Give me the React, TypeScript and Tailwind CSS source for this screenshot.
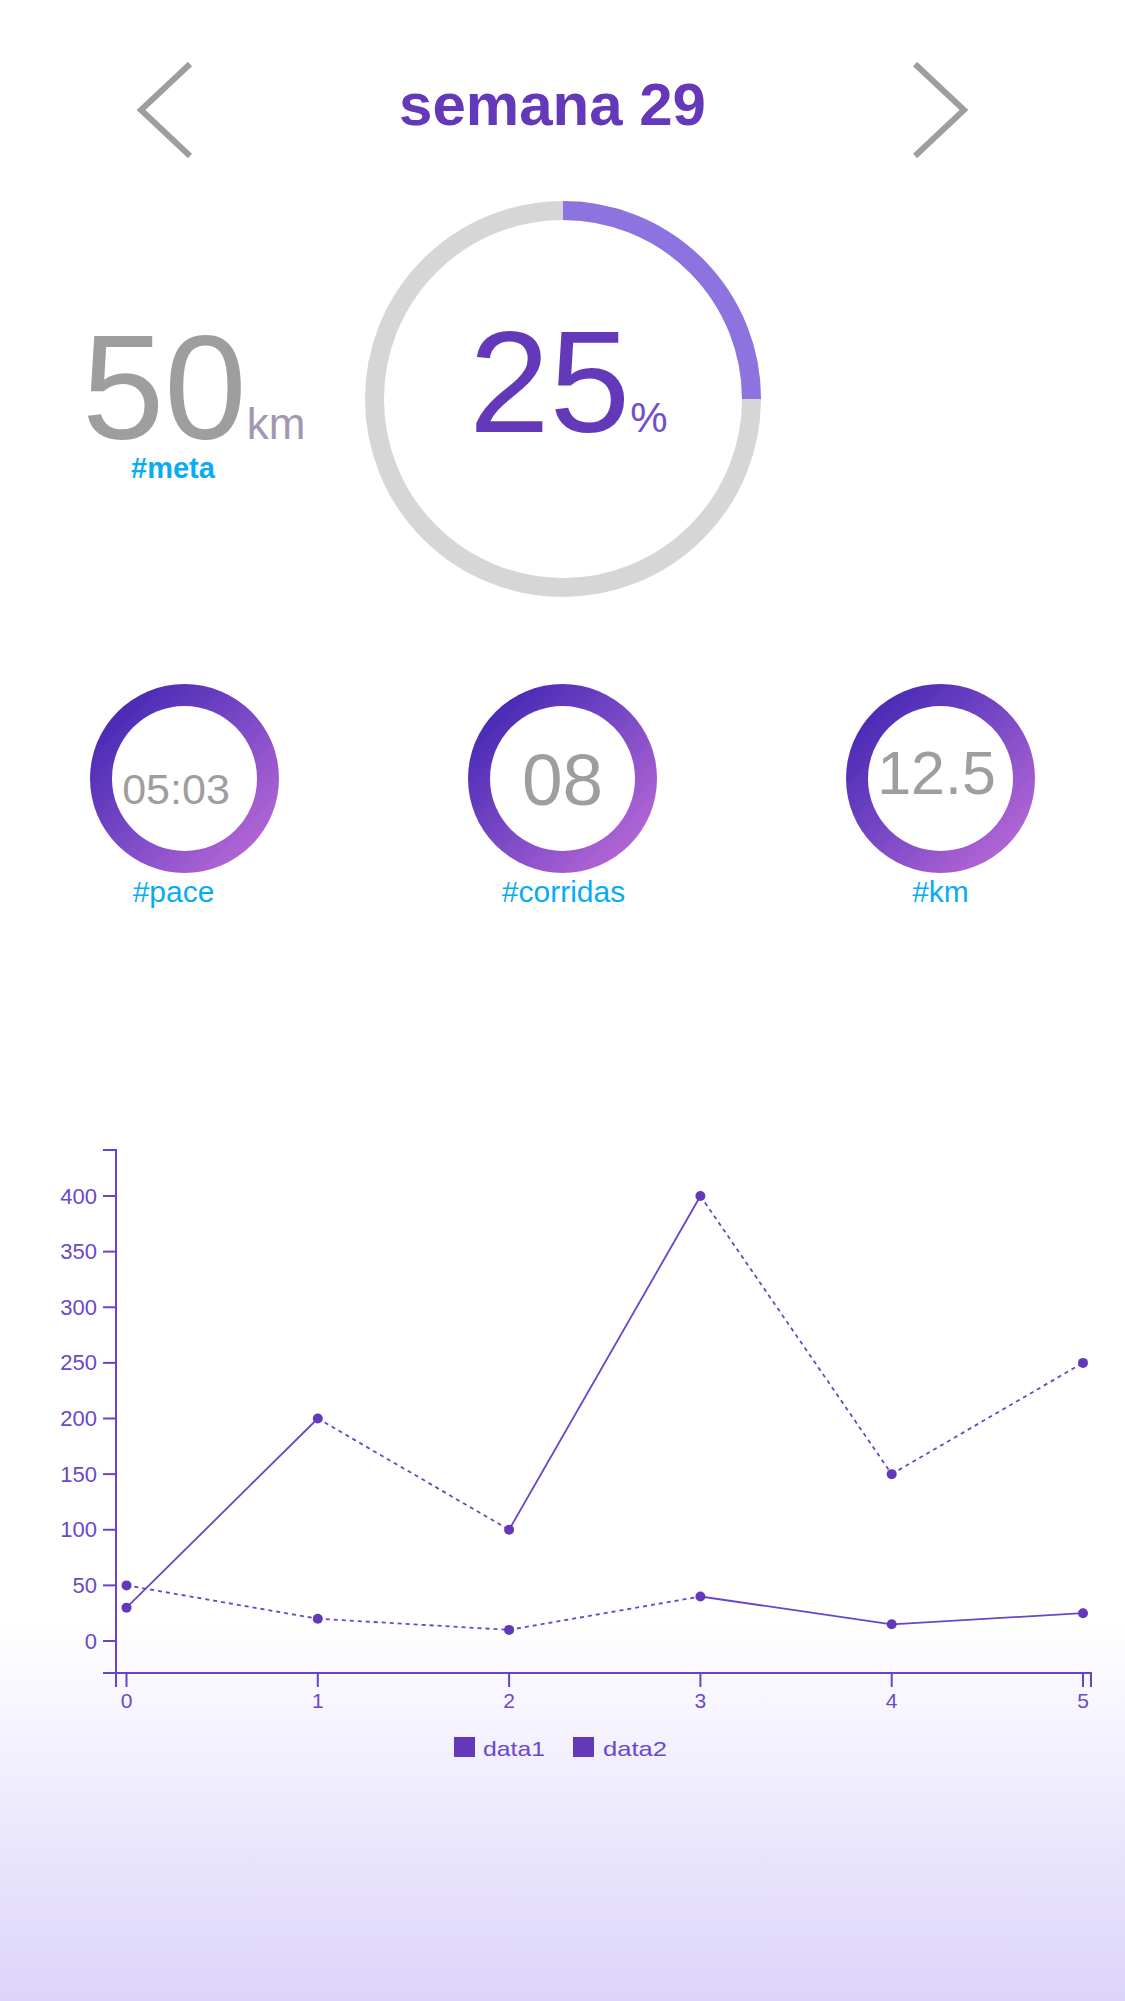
import React from "react";

const PURPLE = "#6439b9";
const AXIS = "#6a40cf";

function Chevron({ dir }: { dir: "left" | "right" }) {
  const pts = dir === "left" ? "57,2 8,48 57,94" : "3,2 52,48 3,94";
  return (
    <svg width="60" height="96" viewBox="0 0 60 96" className="shrink-0">
      <polyline points={pts} fill="none" stroke="#9e9e9e" strokeWidth="6" strokeLinejoin="miter" strokeLinecap="butt" />
    </svg>
  );
}

function Stat({
  value,
  label,
  textClass,
  labelClass,
}: {
  value: string;
  label: string;
  textClass: string;
  labelClass: string;
}) {
  return (
    <div className="flex w-[189px] flex-col items-center">
      <div className="relative h-[189px] w-[189px] rounded-full bg-[linear-gradient(135deg,#4427b3_10%,#7a49c6_50%,#b868d6_90%)] p-[22px]">
        <div className="h-full w-full rounded-full bg-white" />
        <div className={`absolute inset-0 flex justify-center ${textClass}`}>
          <span className="leading-none text-[#9e9e9e]">{value}</span>
        </div>
      </div>
      <span className={`mt-[4px] text-[30px] leading-none text-[#08acf3] ${labelClass}`}>{label}</span>
    </div>
  );
}

const X = (i: number) => 126.5 + i * 191.3;
const Y = (v: number) => 1641 - v * 1.1125;

const data1 = [30, 200, 100, 400, 150, 250];
const data2 = [50, 20, 10, 40, 15, 25];

function seg(d: number[], a: number, b: number) {
  return `M${X(a)},${Y(d[a])}L${X(b)},${Y(d[b])}`;
}

function Chart() {
  const yTicks = [0, 50, 100, 150, 200, 250, 300, 350, 400];
  const xTicks = [0, 1, 2, 3, 4, 5];
  const s1: [number, number, boolean][] = [
    [0, 1, false],
    [1, 2, true],
    [2, 3, false],
    [3, 4, true],
    [4, 5, true],
  ];
  const s2: [number, number, boolean][] = [
    [0, 1, true],
    [1, 2, true],
    [2, 3, true],
    [3, 4, false],
    [4, 5, false],
  ];
  return (
    <svg
      width="1125"
      height="660"
      viewBox="0 1130 1125 660"
      className="block"
      style={{ fontFamily: '"Liberation Sans", Arial, sans-serif' }}
    >
      <path d="M103,1150H116V1673H103" fill="none" stroke={AXIS} strokeWidth="2" />
      <path d="M116,1687V1673H1091V1687" fill="none" stroke={AXIS} strokeWidth="2" />
      {yTicks.map((v) => (
        <g key={v}>
          <line x1="103" x2="116" y1={Y(v)} y2={Y(v)} stroke={AXIS} strokeWidth="2" />
          <text x="97" y={Y(v) + 7.5} textAnchor="end" fontSize="22" fill="#6b48cb">
            {v}
          </text>
        </g>
      ))}
      {xTicks.map((i) => (
        <g key={i}>
          <line x1={X(i)} x2={X(i)} y1="1673" y2="1687" stroke={AXIS} strokeWidth="2" />
          <text x={X(i)} y="1708" textAnchor="middle" fontSize="21" fill="#6b48cb">
            {i}
          </text>
        </g>
      ))}
      {s1.map(([a, b, dashed], k) => (
        <path
          key={"a" + k}
          d={seg(data1, a, b)}
          fill="none"
          stroke="#6a45c8"
          strokeWidth="1.8"
          strokeDasharray={dashed ? "4 4" : undefined}
        />
      ))}
      {s2.map(([a, b, dashed], k) => (
        <path
          key={"b" + k}
          d={seg(data2, a, b)}
          fill="none"
          stroke="#6a45c8"
          strokeWidth="1.8"
          strokeDasharray={dashed ? "4 4" : undefined}
        />
      ))}
      {data1.map((v, i) => (
        <circle key={"p1" + i} cx={X(i)} cy={Y(v)} r="5" fill={PURPLE} />
      ))}
      {data2.map((v, i) => (
        <circle key={"p2" + i} cx={X(i)} cy={Y(v)} r="5" fill={PURPLE} />
      ))}
      <rect x="454" y="1737" width="21" height="20" fill={PURPLE} />
      <text x="483" y="1756" fontSize="21" fill="#6b48cb" textLength="62" lengthAdjust="spacingAndGlyphs">
        data1
      </text>
      <rect x="573" y="1737" width="21" height="20" fill={PURPLE} />
      <text x="603" y="1756" fontSize="21" fill="#6b48cb" textLength="64" lengthAdjust="spacingAndGlyphs">
        data2
      </text>
    </svg>
  );
}

export default function App() {
  const C = 2 * Math.PI * 188.5;
  return (
    <div className="min-h-[2001px] w-full bg-[linear-gradient(180deg,#ffffff_0%,#ffffff_81%,#dcd4fa_100%)] font-['Liberation_Sans',Arial,sans-serif]">
      {/* header */}
      <div className="flex items-center justify-between pl-[133px] pr-[153px] pt-[62px]">
        <Chevron dir="left" />
        <h1 className="mb-[10px] text-[60px] font-bold leading-none text-[#6439b9]">semana 29</h1>
        <Chevron dir="right" />
      </div>

      {/* main goal row */}
      <div className="mt-[43px] flex items-start pl-[82px]">
        <div className="mt-[124px] flex flex-col">
          <div className="flex items-baseline">
            <span className="text-[148px] leading-[0.85] text-[#9e9e9e]">50</span>
            <span className="text-[44px] leading-none text-[#a396b0]">km</span>
          </div>
          <span className="ml-[49px] mt-[3px] text-[29px] font-bold leading-none text-[#08acf3]">#meta</span>
        </div>
        <div className="relative ml-[60px] h-[396px] w-[396px]">
          <svg width="396" height="396" viewBox="0 0 396 396">
            <circle cx="198" cy="198" r="188.5" fill="none" stroke="#d6d6d6" strokeWidth="19" />
            <circle
              cx="198"
              cy="198"
              r="188.5"
              fill="none"
              stroke="#8c73e0"
              strokeWidth="19"
              strokeDasharray={`${C * 0.25} ${C}`}
              transform="rotate(-90 198 198)"
            />
          </svg>
          <div className="absolute inset-0 flex items-baseline justify-center pl-[10px] pt-[109px]">
            <span className="text-[145px] leading-none text-[#6439b9]">25</span>
            <span className="text-[42px] leading-none text-[#7250cc]">%</span>
          </div>
        </div>
      </div>

      {/* small stats */}
      <div className="mt-[87px] flex justify-between px-[90px]">
        <Stat value="05:03" label="#pace" textClass="pt-[84px] pr-[17px] text-[43px]" labelClass="mr-[22px]" />
        <Stat value="08" label="#corridas" textClass="pt-[59px] text-[73px]" labelClass="ml-[2px]" />
        <Stat value="12.5" label="#km" textClass="pt-[59px] pr-[8px] text-[61px]" labelClass="" />
      </div>

      {/* chart */}
      <div className="mt-[223px]">
        <Chart />
      </div>
    </div>
  );
}
